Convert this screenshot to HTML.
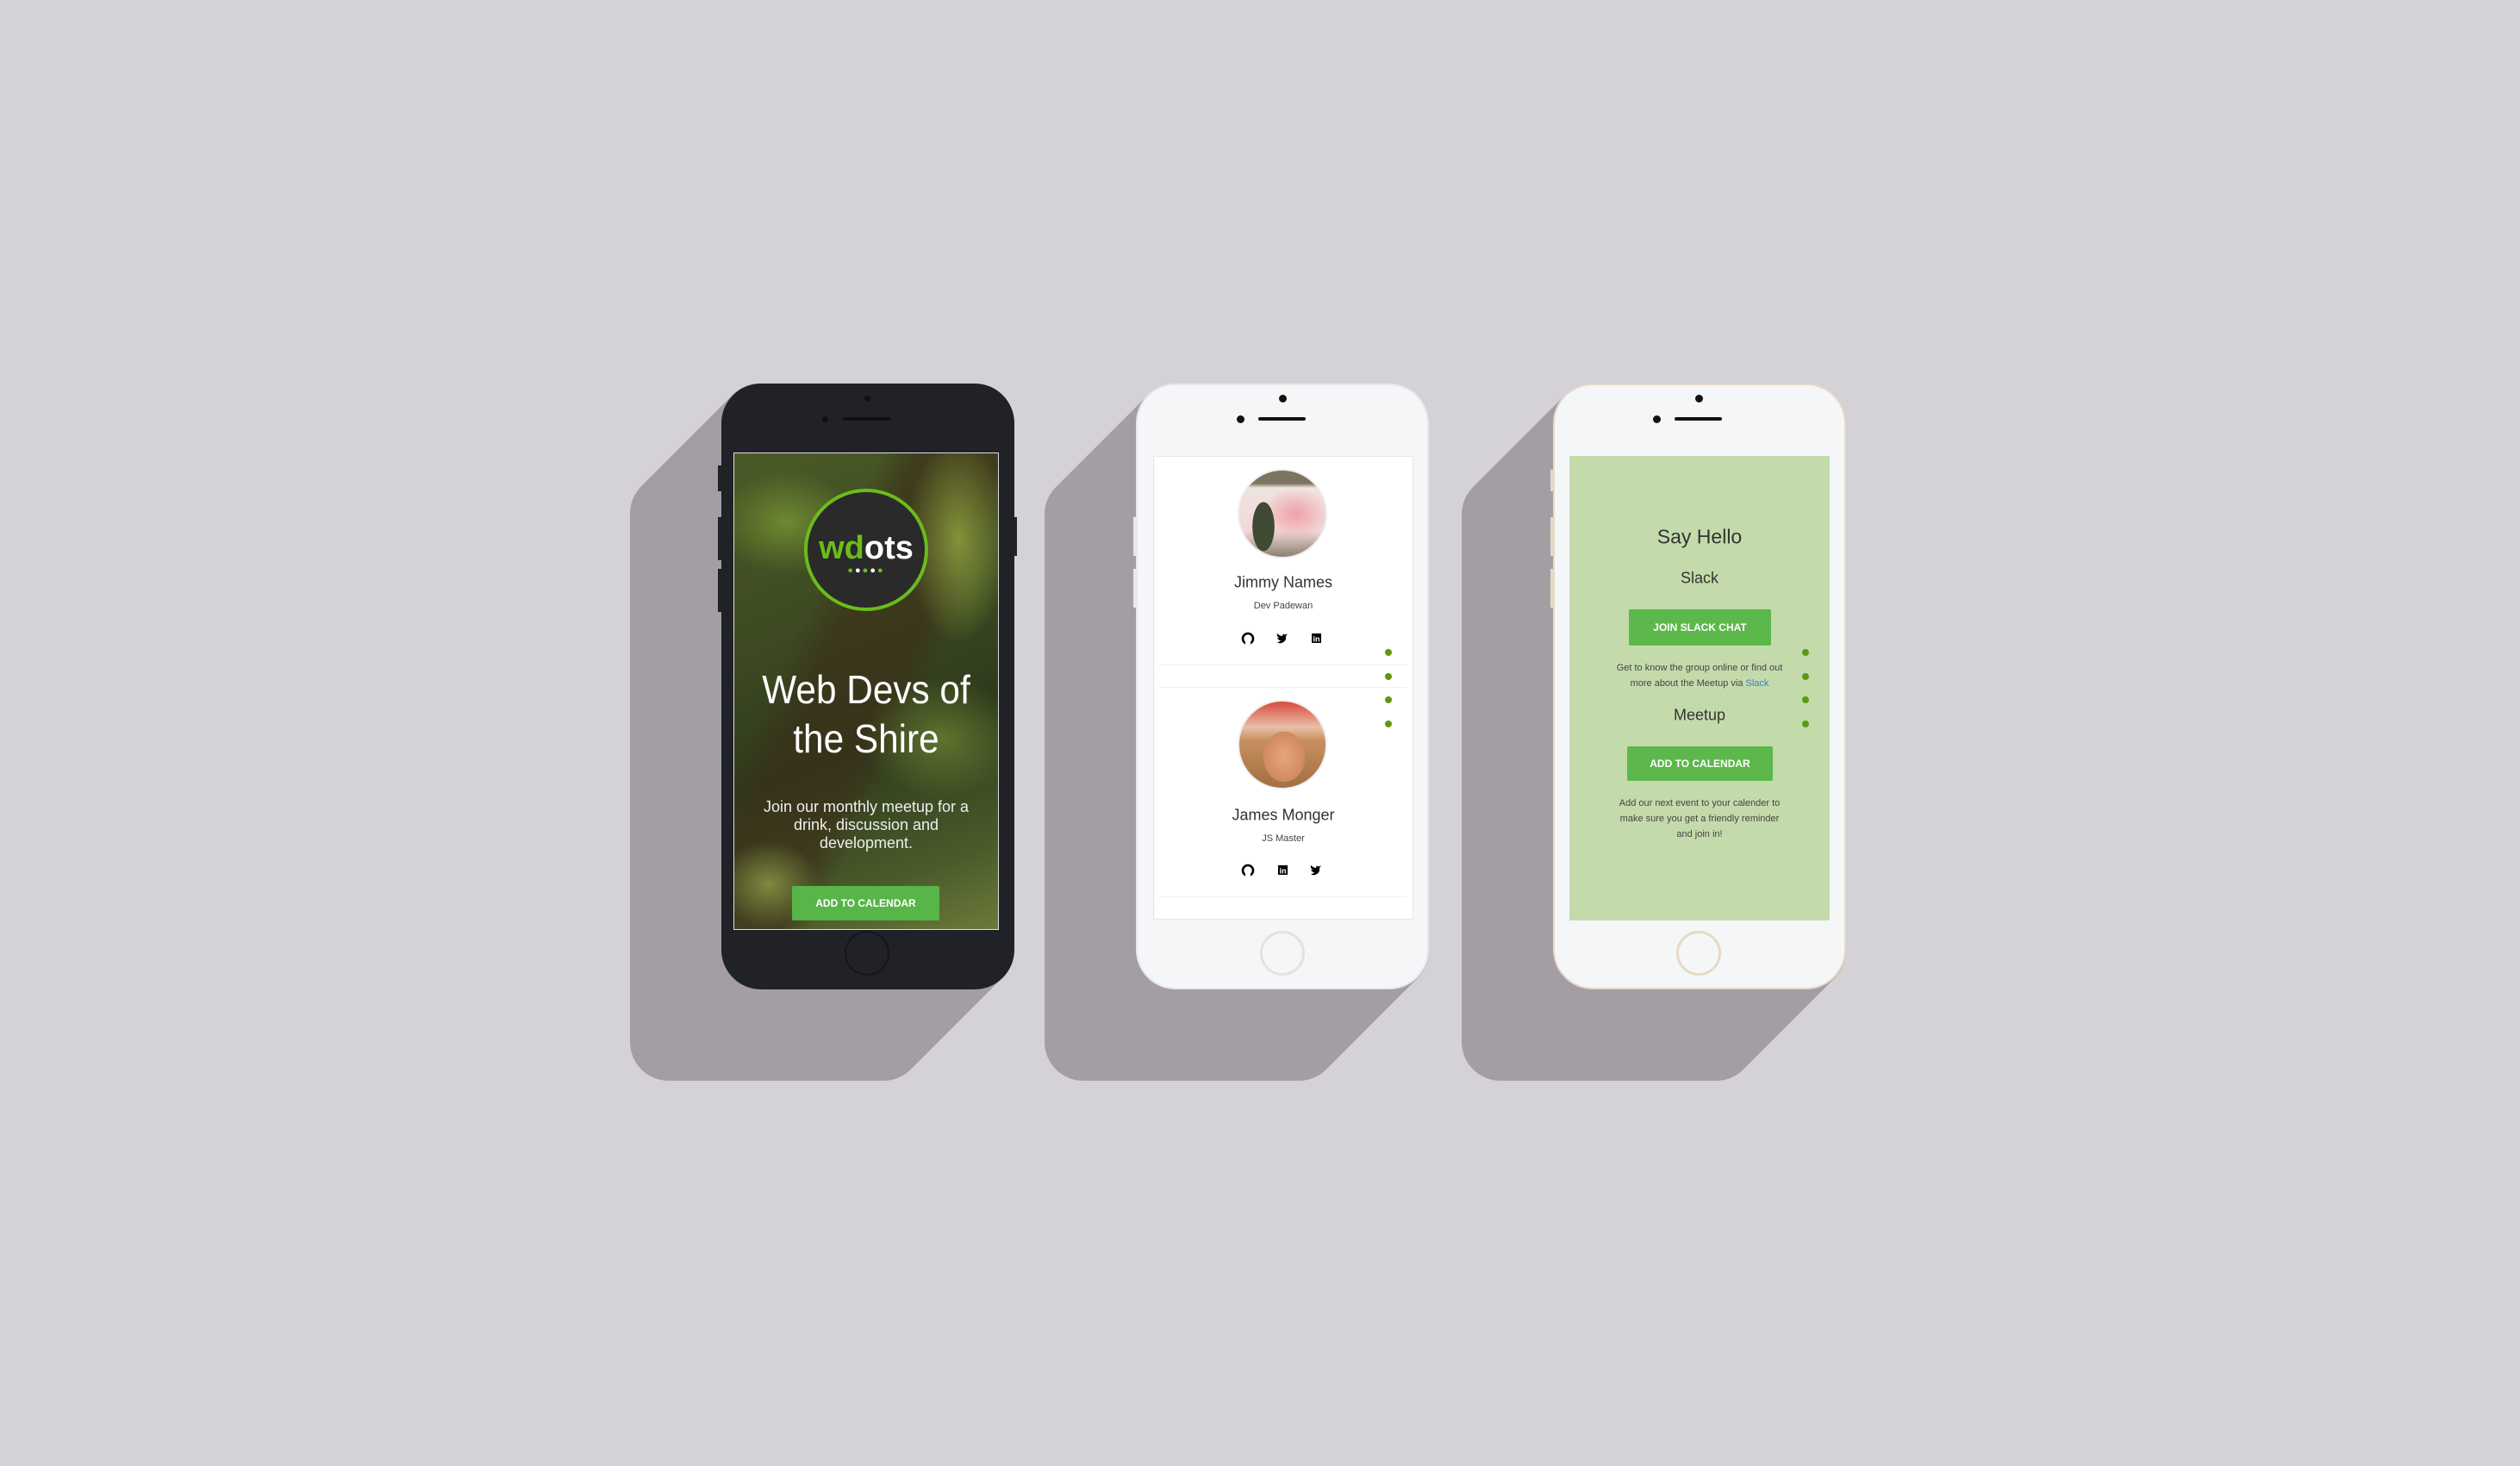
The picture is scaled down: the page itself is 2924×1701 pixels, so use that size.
<!DOCTYPE html>
<html><head><meta charset="utf-8"><style>
*{margin:0;padding:0;box-sizing:border-box}
body{width:2924px;height:1701px;background:#d4d2d7;position:relative;overflow:hidden;font-family:"Liberation Sans",sans-serif}
.abs{position:absolute}
.phone{position:absolute;top:445px;width:340px;height:703px;border-radius:46px}
.ctr{position:absolute;left:0;width:100%;text-align:center;transform:translateY(-50%);white-space:nowrap}
.dot{position:absolute;width:8px;height:8px;border-radius:50%;background:#5a9a12}
</style></head><body>
<svg class="abs" style="left:0;top:0" width="2924" height="1701">
<g fill="#a29ea3" stroke="#a29ea3" stroke-width="90" stroke-linejoin="round">
<polygon points="882,490 776,596 776,1209 1025,1209 1131,1103 1131,490"/>
<polygon points="1363,491 1257,597 1257,1209 1507,1209 1613,1103 1613,491"/>
<polygon points="1847,491 1741,597 1741,1209 1991,1209 2097,1103 2097,491"/>
</g></svg>

<!-- Phone 1 -->
<div class="phone" style="left:837px;background:#202228"></div>
<div class="abs" style="left:833px;top:540px;width:5px;height:30px;background:#202228"></div>
<div class="abs" style="left:833px;top:600px;width:5px;height:50px;background:#202228"></div>
<div class="abs" style="left:833px;top:660px;width:5px;height:50px;background:#202228"></div>
<div class="abs" style="left:1175px;top:600px;width:5px;height:45px;background:#202228"></div>
<div class="abs" style="left:1003px;top:459px;width:7px;height:7px;border-radius:50%;background:#111"></div>
<div class="abs" style="left:954px;top:483px;width:7px;height:7px;border-radius:50%;background:#111"></div>
<div class="abs" style="left:978px;top:484px;width:55px;height:4px;border-radius:2px;background:#111"></div>
<div class="abs" style="left:980px;top:1080px;width:52px;height:52px;border-radius:50%;border:2px solid #15161a"></div>
<div class="abs" style="left:851px;top:525px;width:308px;height:554px;overflow:hidden;border:1px solid #ddd;
background:
radial-gradient(ellipse 60px 120px at 260px 100px,rgba(190,220,80,.55),transparent),
radial-gradient(ellipse 80px 60px at 60px 80px,rgba(150,190,60,.5),transparent),
radial-gradient(ellipse 90px 70px at 240px 330px,rgba(140,170,60,.5),transparent),
radial-gradient(ellipse 60px 50px at 40px 500px,rgba(180,200,90,.55),transparent),
linear-gradient(115deg,transparent 30%,rgba(60,45,25,.6) 38%,rgba(60,45,25,.6) 55%,transparent 62%),
linear-gradient(160deg,#4a5a26 0%,#3d4a22 35%,#2e3a1c 60%,#4a5b2a 85%,#6b7a3a 100%)"></div>
<div class="abs" style="left:933px;top:567px;width:144px;height:142px;border-radius:50%;background:#2a2a2a;border:4px solid #6cbb1c"></div>
<div class="abs" style="left:933px;top:614px;width:144px;text-align:center;font-weight:bold;font-size:38px;color:#fff;line-height:44px"><span style="color:#6cbb1c">wd</span>ots</div>
<div class="abs" style="left:980px;top:656px;width:50px;text-align:center;font-size:11px;line-height:12px;color:#6cbb1c;letter-spacing:2px">●<span style="color:#fff">●</span>●<span style="color:#fff">●</span>●</div>
<div class="abs" style="left:851px;top:772px;width:308px;text-align:center;color:#fff;font-size:46px;line-height:57px;transform:scaleX(.92)">Web Devs of<br>the Shire</div>
<div class="abs" style="left:851px;top:926px;width:308px;text-align:center;color:#eee;font-size:18px;line-height:21px">Join our monthly meetup for a<br>drink, discussion and<br>development.</div>
<div class="abs" style="left:919px;top:1028px;width:171px;height:40px;background:#58b548;border-radius:2px;color:#fff;font-weight:bold;font-size:12px;line-height:40px;text-align:center">ADD TO CALENDAR</div>

<!-- Phone 2 -->
<div class="phone" style="left:1318px;background:#f5f6f8;border:2px solid #e8e8ec"></div>
<div class="abs" style="left:1315px;top:600px;width:4px;height:45px;background:#e8e8ec"></div>
<div class="abs" style="left:1315px;top:660px;width:4px;height:45px;background:#e8e8ec"></div>
<div class="abs" style="left:1484px;top:458px;width:9px;height:9px;border-radius:50%;background:#111"></div>
<div class="abs" style="left:1435px;top:482px;width:9px;height:9px;border-radius:50%;background:#111"></div>
<div class="abs" style="left:1460px;top:484px;width:55px;height:4px;border-radius:2px;background:#111"></div>
<div class="abs" style="left:1462px;top:1080px;width:52px;height:52px;border-radius:50%;border:3px solid #e2e2e4"></div>
<div class="abs" style="left:1338px;top:529px;width:302px;height:538px;background:#fff;border:1px solid #e6e6e6"></div>
<div class="abs" style="left:1345px;top:771px;width:288px;height:1px;background:#f0f0f0"></div>
<div class="abs" style="left:1345px;top:797px;width:288px;height:1px;background:#f0f0f0"></div>
<div class="abs" style="left:1345px;top:1040px;width:288px;height:1px;background:#f0f0f0"></div>
<div class="abs" style="left:1436px;top:544px;width:104px;height:104px;border-radius:50%;border:2px solid #eee;background:
radial-gradient(ellipse 18px 40px at 28px 65px,#3e4a33 70%,transparent 72%),
radial-gradient(ellipse 40px 30px at 65px 50px,#f0a0a8,transparent),
linear-gradient(180deg,#7d7460 0%,#7d7460 15%,#eee4e0 20%,#f2d8d8 70%,#8a8070 100%)"></div>
<div class="abs" style="left:1436px;top:812px;width:104px;height:104px;border-radius:50%;border:2px solid #eee;background:
radial-gradient(ellipse 30px 36px at 52px 64px,#e8a57e,#d08a60 80%,transparent 82%),
linear-gradient(180deg,#d94a3e 0%,#e8c0a8 30%,#c89060 45%,#a07040 100%)"></div>
<div class="ctr" style="left:1338px;width:302px;top:676px;font-size:18px;color:#333">Jimmy Names</div>
<div class="ctr" style="left:1338px;width:302px;top:703px;font-size:11px;color:#444">Dev Padewan</div>
<div class="ctr" style="left:1338px;width:302px;top:946px;font-size:18px;color:#333">James Monger</div>
<div class="ctr" style="left:1338px;width:302px;top:973px;font-size:11px;color:#444">JS Master</div>
<svg class="abs" style="left:1338px;top:725px" width="302" height="300" viewBox="0 0 302 300">
<circle cx="110" cy="16" r="6" fill="none" stroke="#000" stroke-width="2.6"/><rect x="107" y="19" width="6" height="5" fill="#fff"/>
<path d="M141 11 q3 1 5 -1 q-1 2 -2 3 q1 6 -5 8 q-3 1 -5 -1 q3 0 4 -2 q-3 0 -4 -3 q2 1 2 0 q-3 -2 -2 -5 q3 3 6 3 q0 -3 3 -2z" fill="#000" transform="translate(10,0)"/>
<rect x="184" y="10" width="11" height="11" fill="#000"/><text x="185.5" y="19.5" font-size="9" font-weight="bold" fill="#fff" font-family="Liberation Sans">in</text>
<g transform="translate(0,269)">
<circle cx="110" cy="16" r="6" fill="none" stroke="#000" stroke-width="2.6"/><rect x="107" y="19" width="6" height="5" fill="#fff"/>
<rect x="145" y="10" width="11" height="11" fill="#000"/><text x="146.5" y="19.5" font-size="9" font-weight="bold" fill="#fff" font-family="Liberation Sans">in</text>
<path d="M141 11 q3 1 5 -1 q-1 2 -2 3 q1 6 -5 8 q-3 1 -5 -1 q3 0 4 -2 q-3 0 -4 -3 q2 1 2 0 q-3 -2 -2 -5 q3 3 6 3 q0 -3 3 -2z" fill="#000" transform="translate(49,0)"/>
</g></svg>
<div class="dot" style="left:1607px;top:753px"></div><div class="dot" style="left:1607px;top:781px"></div><div class="dot" style="left:1607px;top:808px"></div><div class="dot" style="left:1607px;top:836px"></div>

<!-- Phone 3 -->
<div class="phone" style="left:1802px;background:#f5f6f8;border:2px solid #e6dac6"></div>
<div class="abs" style="left:1799px;top:545px;width:4px;height:25px;background:#e6dac6"></div>
<div class="abs" style="left:1799px;top:600px;width:4px;height:45px;background:#e6dac6"></div>
<div class="abs" style="left:1799px;top:660px;width:4px;height:45px;background:#e6dac6"></div>
<div class="abs" style="left:1967px;top:458px;width:9px;height:9px;border-radius:50%;background:#111"></div>
<div class="abs" style="left:1918px;top:482px;width:9px;height:9px;border-radius:50%;background:#111"></div>
<div class="abs" style="left:1943px;top:484px;width:55px;height:4px;border-radius:2px;background:#111"></div>
<div class="abs" style="left:1945px;top:1080px;width:52px;height:52px;border-radius:50%;border:3px solid #e6dac6"></div>
<div class="abs" style="left:1821px;top:529px;width:302px;height:539px;background:#c3dbab"></div>
<div class="ctr" style="left:1821px;width:302px;top:623px;font-size:23px;color:#333">Say Hello</div>
<div class="ctr" style="left:1821px;width:302px;top:671px;font-size:18px;color:#333">Slack</div>
<div class="abs" style="left:1890px;top:707px;width:165px;height:42px;background:#5cb84a;border-radius:2px;color:#fff;font-weight:bold;font-size:12px;line-height:42px;text-align:center">JOIN SLACK CHAT</div>
<div class="abs" style="left:1821px;top:766px;width:302px;text-align:center;font-size:11px;line-height:18px;color:#444">Get to know the group online or find out<br>more about the Meetup via <span style="color:#3a7fc4">Slack</span></div>
<div class="ctr" style="left:1821px;width:302px;top:830px;font-size:18px;color:#333">Meetup</div>
<div class="abs" style="left:1888px;top:866px;width:169px;height:40px;background:#5cb84a;border-radius:2px;color:#fff;font-weight:bold;font-size:12px;line-height:40px;text-align:center">ADD TO CALENDAR</div>
<div class="abs" style="left:1821px;top:923px;width:302px;text-align:center;font-size:11px;line-height:18px;color:#444">Add our next event to your calender to<br>make sure you get a friendly reminder<br>and join in!</div>
<div class="dot" style="left:2091px;top:753px"></div><div class="dot" style="left:2091px;top:781px"></div><div class="dot" style="left:2091px;top:808px"></div><div class="dot" style="left:2091px;top:836px"></div>
</body></html>
